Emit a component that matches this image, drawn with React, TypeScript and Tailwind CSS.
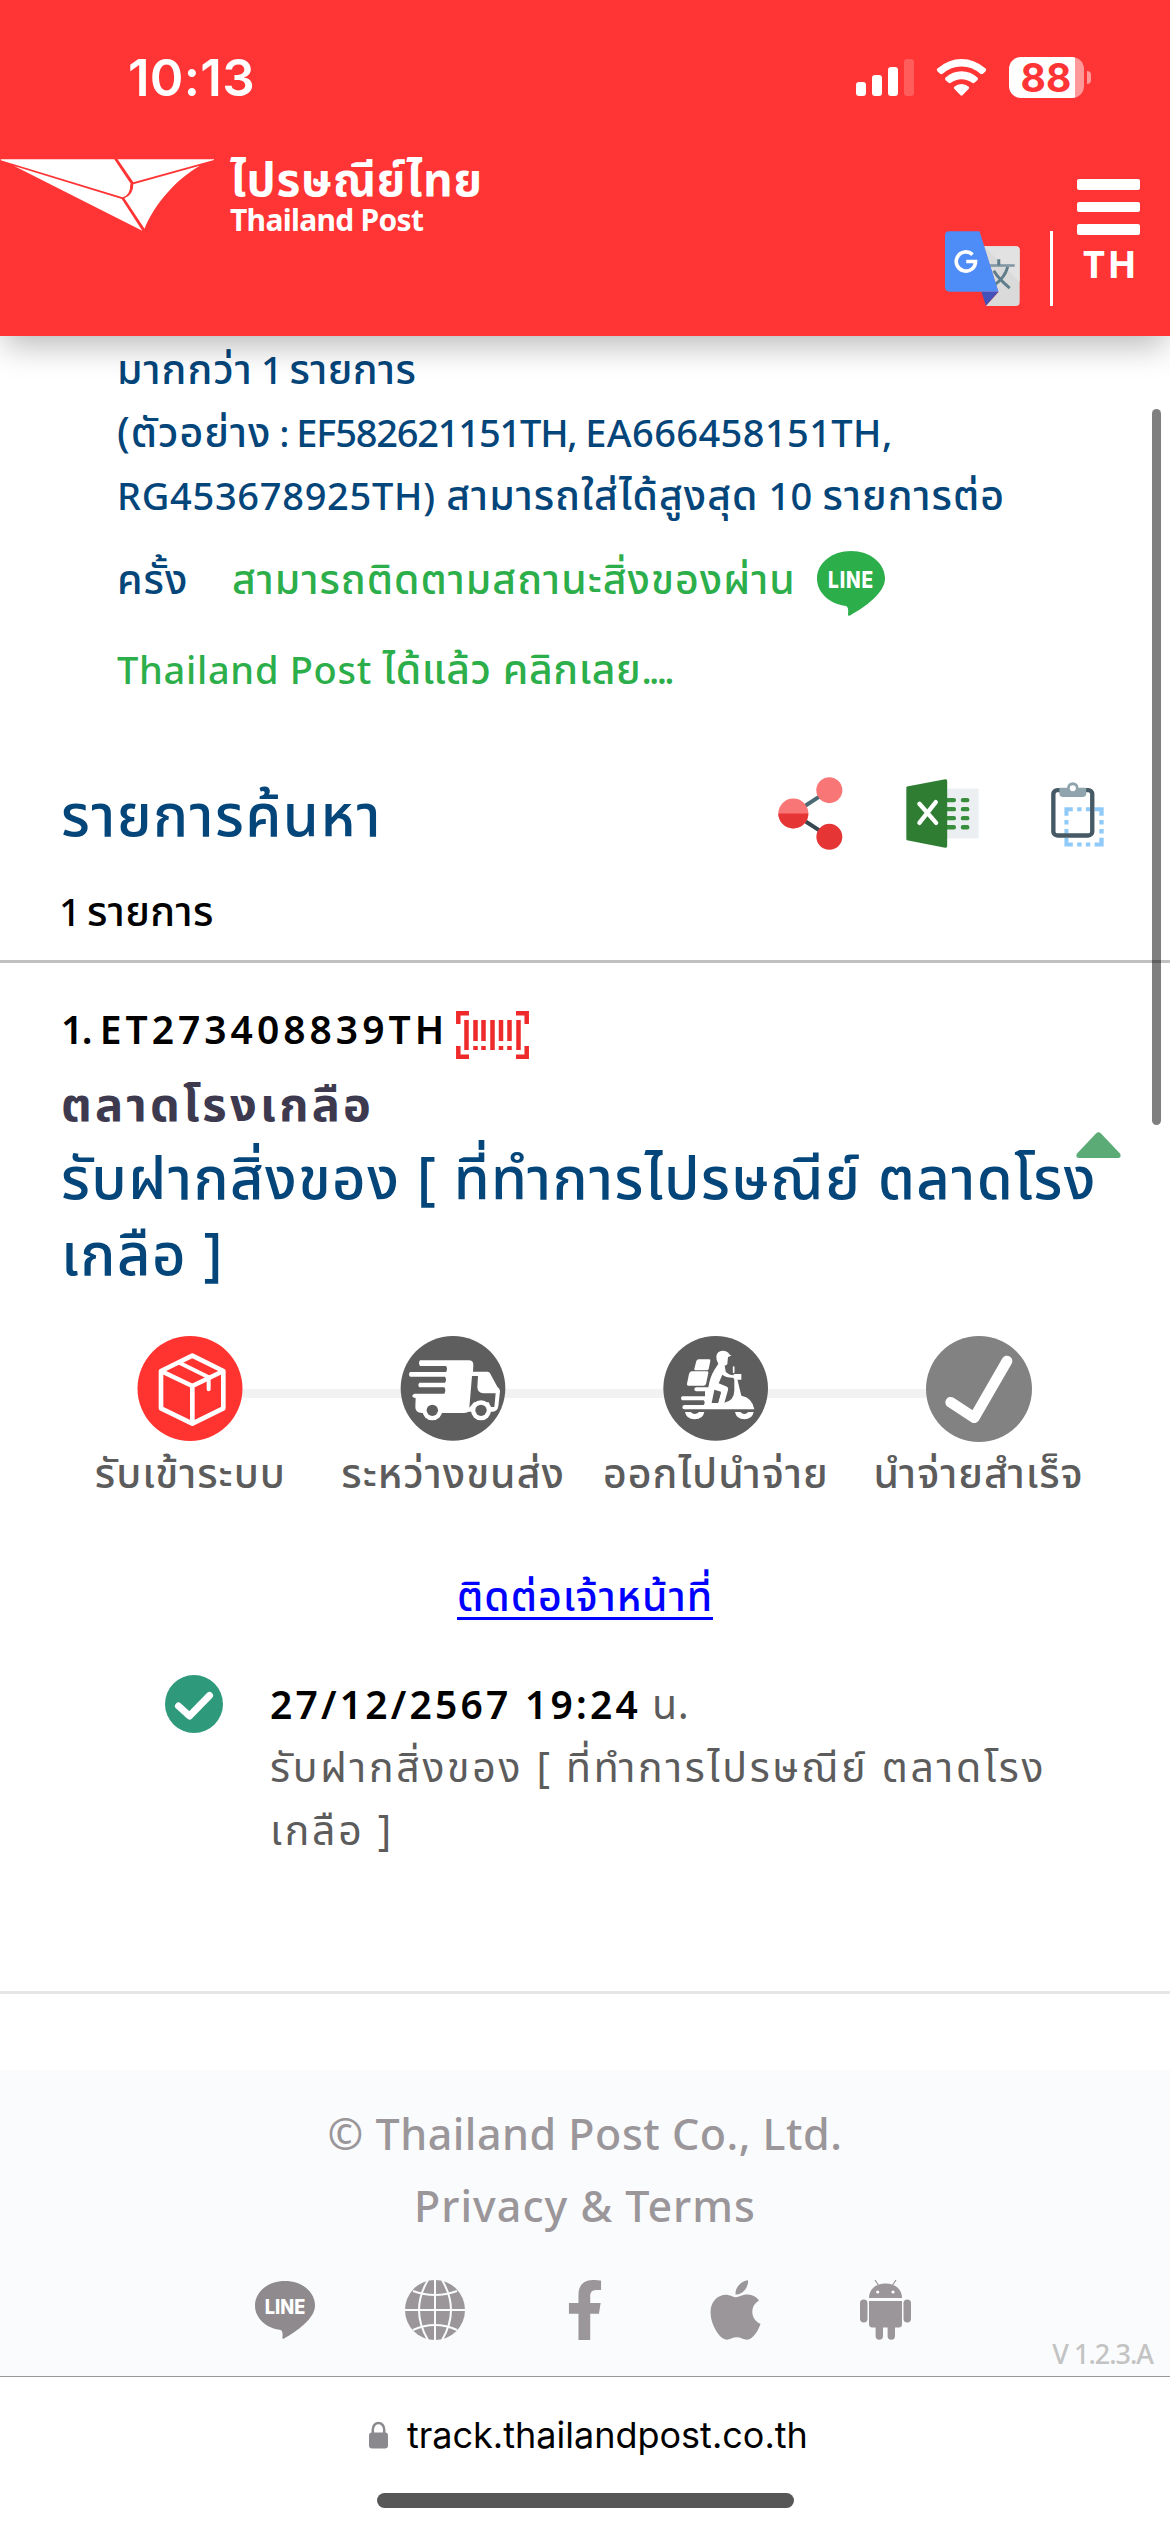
import React from "react";
import { FaApple, FaFacebookF } from "react-icons/fa";

const steps = [
  { label: "รับเข้าระบบ", icon: <BoxIcon /> },
  { label: "ระหว่างขนส่ง", icon: <TruckIcon /> },
  { label: "ออกไปนำจ่าย", icon: <ScooterIcon /> },
  { label: "นำจ่ายสำเร็จ", icon: <DoneIcon /> },
];

function LogoMark() {
  return (
    <svg
      className="mt-[2px] h-[72px] w-[214px]"
      viewBox="0 477 573 216"
      preserveAspectRatio="none"
      fill="#fff"
    >
      <path d="M2 478H306L349 550Q350 586 328 592L2 481Z" />
      <path d="M315 478H573V480L357 547Z" />
      <path d="M38 498L326 597L381 692Z" />
      <path d="M357 553L535 497C470 540 415 610 387 686L333 595Q357 585 357 553Z" />
    </svg>
  );
}

function SignalIcon() {
  return (
    <svg className="h-[37px] w-[58px]" viewBox="0 0 58 37" fill="#fff">
      <rect x="0" y="23" width="10" height="14" rx="3" />
      <rect x="16" y="16" width="10" height="21" rx="3" />
      <rect x="32" y="8" width="10" height="29" rx="3" />
      <rect x="48" y="0" width="10" height="37" rx="3" opacity="0.2" />
    </svg>
  );
}

function WifiIcon() {
  return (
    <svg className="h-[37px] w-[51px]" viewBox="409 177 152 112" fill="#fff">
      <path d="M412 206Q445 177 485 177T558 206Q562 210 558 214L550 222Q546 225 542 222Q517 200 485 200T428 222Q424 225 420 222L412 214Q408 210 412 206Z" />
      <path d="M437 233Q458 214 485 214T533 233Q537 237 533 241L524 249Q521 252 517 249Q503 238 485 238T453 249Q449 252 446 249L437 241Q433 237 437 233Z" />
      <path d="M463 261Q473 253 485 253T507 261Q509 264 507 267L488 287Q485 290 482 287L463 267Q461 264 463 261Z" />
    </svg>
  );
}

function TranslateIcon() {
  return (
    <svg className="h-[75px] w-[75px]" viewBox="435 692 226 226">
      <path d="M552 738H648Q660 738 660 750V906Q660 918 648 918H558L596 876Z" fill="#dadada" />
      <path d="M552 738H648Q660 738 660 750V845Z" fill="#e2e2e2" />
      <path d="M545 875H596L558 917Z" fill="#4352b8" />
      <path d="M570 796H645" stroke="#8299a5" strokeWidth="8" />
      <path d="M597 777V796M624 800Q615 832 587 852M582 812Q596 836 630 864" stroke="#607d8b" strokeWidth="9" fill="none" />
      <path d="M447 693H539L596 875H449Q435 875 435 861V705Q435 693 447 693Z" fill="#4e8cf7" />
      <path d="M518 763A29 29 0 1 0 527 784H499" stroke="#fff" strokeWidth="11" fill="none" />
    </svg>
  );
}

function MenuIcon() {
  return (
    <div className="flex flex-col gap-[12px]">
      <div className="h-[10.5px] w-[63px] rounded-[2px] bg-white" />
      <div className="h-[10.5px] w-[63px] rounded-[2px] bg-white" />
      <div className="h-[10.5px] w-[63px] rounded-[2px] bg-white" />
    </div>
  );
}

function LineIcon({ className }: { className: string }) {
  return (
    <svg className={className} viewBox="0 0 68 65" preserveAspectRatio="none">
      <path
        d="M34 0C15 0 0 12 0 27.500C0 42 13 53 29 55Q32 56 31 64Q31 65 33 64.500C48 56 68 42 68 27.500C68 12 53 0 34 0Z"
        fill="currentColor"
      />
      <text
        x="34"
        y="36.500"
        textAnchor="middle"
        textLength="46"
        lengthAdjust="spacingAndGlyphs"
        fontFamily="Inter, sans-serif"
        fontWeight="800"
        fontSize="22.500"
        fill="#fff"
      >
        LINE
      </text>
    </svg>
  );
}

function ShareIcon() {
  return (
    <svg className="h-[73px] w-[65px]" viewBox="113 80 195 218">
      <path d="M159 189L267 119" stroke="#4a6b74" strokeWidth="12" />
      <path d="M159 189L267 259" stroke="#37474f" strokeWidth="12" />
      <circle cx="267" cy="119" r="39" fill="#f87676" />
      <circle cx="267" cy="259" r="39" fill="#e53535" />
      <circle cx="159" cy="189" r="45" fill="#f87676" />
      <path d="M114 189A45 45 0 0 0 204 189Z" fill="#e53535" />
    </svg>
  );
}

function ExcelIcon() {
  return (
    <svg className="h-[69px] w-[73px]" viewBox="497 86 218 206">
      <rect x="600" y="114" width="114" height="150" rx="5" fill="#eceff1" />
      <path
        d="M620 149H640M620 176H640M620 203H640M620 230H640M667 149H680M667 176H680M667 203H680M667 230H680"
        stroke="#388e3c"
        strokeWidth="13"
        strokeLinecap="round"
      />
      <path d="M500 108L614 87Q620 86 620 92V286Q620 292 614 291L500 269Q498 268 498 265V112Q498 109 500 108Z" fill="#2f7d32" />
      <path d="M537 160L587 217M586 155L537 217" stroke="#fff" strokeWidth="13" strokeLinecap="round" />
    </svg>
  );
}

function ClipboardIcon() {
  return (
    <svg className="h-[65px] w-[53px]" viewBox="932 96 158 193">
      <path
        d="M972 196V171H997V183H984V196ZM1062 171H1089V196H1076V183H1062ZM1089 262V288H1062V276H1076V262ZM997 288H972V262H984V276H997Z"
        fill="#90caf9"
      />
      <path
        d="M1010 171H1023V183H1010ZM1036 171H1049V183H1036ZM1010 276H1023V288H1010ZM1036 276H1049V288H1036ZM972 209H984V222H972ZM972 236H984V249H972ZM1076 209H1089V222H1076ZM1076 236H1089V249H1076Z"
        fill="#90caf9"
      />
      <rect x="939" y="120" width="116" height="135" rx="12" fill="none" stroke="#455a64" strokeWidth="13" />
      <path d="M957 113H980A17 17 0 0 1 1014 113H1037V131Q1037 140 1028 140H966Q957 140 957 131Z" fill="#90a4ae" />
      <circle cx="997" cy="114" r="9" fill="#fff" />
    </svg>
  );
}

function BarcodeIcon() {
  return (
    <svg className="h-[48px] w-[73px]" viewBox="0 0 73 48" fill="none" stroke="#ee2a2a" strokeWidth="4.500">
      <path d="M13 2.300H2.300V13M60 2.300H70.700V13M13 45.700H2.300V35M60 45.700H70.700V35" />
      <path d="M10.500 9V39M36.500 9V39M62.500 9V39" />
      <path d="M19.500 9V30M27.500 9V30M45 9V30M53.500 9V30" />
      <path d="M19.500 35V39M27.500 35V39M45 35V39M53.500 35V39" />
    </svg>
  );
}

function BoxIcon() {
  return (
    <svg className="h-[105px] w-[106px]" viewBox="172 77 318 315" fill="none" stroke="#fff" strokeWidth="14">
      <circle cx="331" cy="234.500" r="157.500" fill="#ff3431" stroke="none" />
      <path d="M338 136L431 182V294L338 340L244 294V182Z" strokeLinejoin="round" />
      <path d="M244 182L338 227L431 182M338 227V340" strokeLinejoin="round" />
      <path d="M299 157L387 201V237" strokeWidth="12" strokeLinecap="round" />
    </svg>
  );
}

function TruckIcon() {
  return (
    <svg className="h-[105px] w-[106px]" viewBox="962 77 318 315">
      <circle cx="1121" cy="234" r="157" fill="#5e5e5e" />
      <path
        d="M1022 150H1168Q1183 150 1182 165L1181 184H1225Q1230 185 1232 189L1254 229Q1263 236 1262 243L1257 288Q1254 304 1240 304H1168Q1162 308 1150 308H1028Q1007 307 1008 289L1009 263Q999 262 999 256Q1000 251 1006 250H1095Q1101 240 1095 231H1020Q1014 224 1020 217H1097Q1103 208 1097 199H992Q986 192 992 185H1100Q1106 176 1100 167H1022Q1016 158 1022 150Z"
        fill="#fff"
      />
      {/* door, with the window left white */}
      <path d="M1178 197H1196L1194 230Q1195 248 1212 249H1249L1245 290H1235L1228 276H1184L1170 292Z" fill="#5e5e5e" />
      <circle cx="1059" cy="300" r="30" fill="#fff" />
      <circle cx="1059" cy="300" r="17" fill="#5e5e5e" />
      <circle cx="1205" cy="300" r="30" fill="#fff" />
      <circle cx="1205" cy="300" r="17" fill="#5e5e5e" />
    </svg>
  );
}

function ScooterIcon() {
  return (
    <svg className="h-[105px] w-[106px]" viewBox="218 77 318 315" fill="#fff">
      <circle cx="376" cy="234" r="157" fill="#5e5e5e" />
      <path d="M325 147H357Q361 147 360 152L355 176Q354 180 350 180H315Q311 180 312 175L318 152Q320 147 325 147Z" />
      <path d="M304 183H351Q355 183 354 188L347 221Q345 226 340 226H294Q289 226 290 220L296 191Q298 183 304 183Z" />
      {/* rider */}
      <path d="M378 138Q380 122 397 121Q412 121 417 132L423 136L413 140L411 161Q409 166 403 165L406 184Q414 193 430 195V191H453V208H432L429 202Q408 203 396 193L385 219L410 229Q415 232 413 239L402 278H383L392 244L372 238L364 278H344V243H318Q312 243 312 237T318 231H354Q359 200 372 179L384 160Q377 151 378 138Z" />
      <path d="M374 247L392 246L383 278H366Z" fill="#5e5e5e" />
      <path d="M430 170V186" stroke="#fff" strokeWidth="5" strokeLinecap="round" />
      {/* scooter body */}
      <path d="M432 207H441L453 256Q486 262 492 297H282Q276 297 276 291T282 284H340Q346 277 340 270H275Q269 264 275 258H345V278H400Q432 272 432 240Z" />
      <path d="M284 305H301Q313 317 326 305H342Q338 327 313 327T284 305Z" />
      <path d="M434 305H450Q462 317 474 305H490Q486 327 462 327T434 305Z" />
    </svg>
  );
}

function DoneIcon() {
  return (
    <svg className="h-[106px] w-[106px]" viewBox="1008 74 318 318" fill="none">
      <circle cx="1167" cy="233" r="159" fill="#828282" />
      <path d="M1082 273L1153 319L1251 149" stroke="#fff" strokeWidth="32" strokeLinecap="round" strokeLinejoin="round" />
    </svg>
  );
}

function GlobeIcon() {
  return (
    <svg className="h-[60px] w-[60px]" viewBox="0 0 60 60">
      <circle cx="30" cy="30" r="30" fill="#9a969a" />
      <g fill="none" stroke="#fafbfd" strokeWidth="2">
        <path d="M30 0V60M0 30H60" />
        <path d="M23 0Q5 30 23 60M37 0Q55 30 37 60" />
        <path d="M8 11Q30 19 52 11M8 50Q30 40 52 50" />
      </g>
    </svg>
  );
}

function AndroidIcon() {
  return (
    <svg className="h-[60px] w-[51px]" viewBox="0 0 51 60" fill="#9a969a">
      <path d="M15 0L19 6M36 0L32 6" stroke="#9a969a" strokeWidth="1.200" />
      <path d="M9 18C9 9 16 3.500 25.500 3.500S42 9 42 18Z" />
      <path d="M9 21H42V44Q42 47.500 38.500 47.500H35V56A3.700 3.700 0 0 1 27.600 56V47.500H23V56A3.700 3.700 0 0 1 15.600 56V47.500H12.500Q9 47.500 9 44Z" />
      <rect x="0" y="19.500" width="7.500" height="23" rx="3.700" />
      <rect x="43.500" y="19.500" width="7.500" height="23" rx="3.700" />
      <circle cx="17.700" cy="12" r="1.600" fill="#fff" />
      <circle cx="33" cy="12" r="1.600" fill="#fff" />
    </svg>
  );
}

function LockIcon() {
  return (
    <svg className="h-[28px] w-[19px]" viewBox="0 0 19 28">
      <path d="M3.800 13V8.500A5.700 6.500 0 0 1 15.200 8.500V13" fill="none" stroke="#8a898e" strokeWidth="2.500" />
      <rect y="11.500" width="19" height="16" rx="3" fill="#8a898e" />
    </svg>
  );
}

const Header = () => (
  <header className="relative z-10 h-[336px] bg-[#ff3434] text-white shadow-[0_14px_30px_-4px_rgba(0,0,0,0.27)]">
    <div className="flex h-[157px] items-start justify-between pr-[79px] pl-[128px]">
      <span className="mt-[48px] font-['Inter'] text-[51px] leading-[60px] font-semibold tracking-[0.3px]">
        10:13
      </span>
      <div className="mt-[57px] flex h-[41px] items-center">
        <SignalIcon />
        <div className="w-[22px]" />
        <WifiIcon />
        <div className="w-[22px]" />
        <div className="flex h-[41px] w-[75px] items-center justify-center rounded-[12px] bg-[linear-gradient(90deg,#fff_66px,#ff9999_66px)] pr-[1px] font-['Inter'] text-[39px] leading-[41px] font-bold text-[#ff3434]">
          88
        </div>
        <div className="ml-[3px] h-[13px] w-[4px] rounded-r-full bg-[#ff9999]" />
      </div>
    </div>
    <div className="flex items-start justify-between pr-[30px]">
      <div className="flex">
        <LogoMark />
        <div className="ml-[16px] whitespace-nowrap">
          <div className="text-[46px] leading-[42px] font-bold tracking-[0.8px]">ไปรษณีย์ไทย</div>
          <div className="mt-[3px] text-[30px] leading-[36px] font-bold tracking-[-0.7px]">
            Thailand Post
          </div>
        </div>
      </div>
      <div className="flex">
        <div className="mt-[74px]">
          <TranslateIcon />
        </div>
        <div className="mt-[74px] ml-[30px] h-[75px] w-[3px] bg-white" />
        <div className="mt-[22px] ml-[24px] w-[63px]">
          <MenuIcon />
          <div className="mt-[3px] pl-[6px] text-[38px] leading-[50px] font-bold tracking-[2.5px]">
            TH
          </div>
        </div>
      </div>
    </div>
  </header>
);

const Intro = () => (
  <div className="mt-[1px] pl-[117px] text-[41px] leading-[63px] font-medium tracking-[1px] whitespace-nowrap text-[#04457a]">
    <p>
      มากกว่า<span className="text-[38px] leading-none tracking-[-1.6px]"> 1 </span>
      <span className="tracking-[0.4px]">รายการ</span>
    </p>
    <p>
      (ตัวอย่าง<span className="text-[36px] leading-none tracking-[-1.2px]"> : </span>
      <span className="text-[38px] leading-none tracking-[-1.2px]">EF582621151TH, </span>
      <span className="text-[38px] leading-none tracking-[0.4px]">EA666458151TH,</span>
    </p>
    <p>
      <span className="text-[38px] leading-none tracking-[0.7px]">RG453678925TH) </span>
      สามารถใส่ได้สูงสุด<span className="text-[38px] leading-none tracking-[0.2px]"> 10 </span>รายการต่อ
    </p>
    <div className="flex h-[105px] items-center text-[#2cae4a]">
      <span className="w-[115px] text-[#04457a]">ครั้ง</span>
      <span className="w-[585px]">สามารถติดตามสถานะสิ่งของผ่าน</span>
      <LineIcon className="mt-[9px] h-[65px] w-[68px]" />
    </div>
    <p className="leading-[75px] text-[#2cae4a]">
      <span className="text-[38px] leading-none tracking-[0.7px]">Thailand Post </span>
      <span className="tracking-[0.6px]">ได้แล้ว คลิกเลย</span>
      <span className="text-[38px] leading-none tracking-[-2.7px]">....</span>
    </p>
  </div>
);

const Progress = () => (
  <div className="relative mt-[44px] h-[172px] pr-[60px] pl-[59px]">
    <div className="absolute top-[53px] left-[190px] h-[9px] w-[789px] bg-[#f2f2f2]" />
    <div className="relative grid grid-cols-4">
      {steps.map((step) => (
        <div key={step.label} className="flex flex-col items-center">
          <div className="h-[104px]">{step.icon}</div>
          <span className="text-[41px] leading-[64px] font-medium tracking-[1px] whitespace-nowrap text-[#5c5c5c]">
            {step.label}
          </span>
        </div>
      ))}
    </div>
  </div>
);

const Footer = () => (
  <footer className="relative mt-[76px] h-[306px] bg-[#fafbfd] pt-[28px] text-center text-[#9a969a]">
    <p className="text-[43px] leading-[72px] font-medium tracking-[0.5px]">© Thailand Post Co., Ltd.</p>
    <p className="text-[43px] leading-[72px] font-medium tracking-[1px]">Privacy &amp; Terms</p>
    <div className="mx-auto mt-[38px] grid h-[60px] w-[750px] grid-cols-5 grid-rows-[60px] place-items-center">
      <LineIcon className="h-[58px] w-[60px] text-[#8e8a8e]" />
      <GlobeIcon />
      <FaFacebookF className="h-[60px] w-[38px]" />
      <FaApple className="h-[68px] w-[51px]" preserveAspectRatio="none" />
      <AndroidIcon />
    </div>
    <span className="absolute right-[17px] bottom-[2px] text-[27px] leading-[40px] font-medium tracking-[-1px] text-[#c3c3c3]">
      V 1.2.3.A
    </span>
  </footer>
);

export default function App() {
  return (
    <div className="relative h-[2532px] w-[1170px] overflow-hidden bg-white font-['Noto_Sans','Noto_Sans_Thai',sans-serif]">
      <Header />
      <main>
        <Intro />
        <div className="mt-[71px] flex h-[73px] items-start pr-[66px] pl-[61px]">
          <h1 className="flex-1 text-[58px] leading-[74px] font-medium tracking-[1.4px] whitespace-nowrap text-[#04457a]">
            รายการค้นหา
          </h1>
          <ShareIcon />
          <div className="mt-[2px] ml-[63px]">
            <ExcelIcon />
          </div>
          <div className="mt-[5px] ml-[72px]">
            <ClipboardIcon />
          </div>
        </div>
        <p className="mt-[28px] pl-[59px] text-[41px] leading-[64px] font-medium tracking-[0.4px] text-black">
          <span className="text-[38px] leading-none tracking-[-1.8px]">1 </span>รายการ
        </p>
        <div className="mt-[18px] h-[3px] bg-[#c1c1c1]" />

        <section className="relative h-[329px] pt-[34px] pl-[61px] whitespace-nowrap">
          <div className="flex h-[64px] items-center">
            <span className="w-[395px] text-[39px] font-semibold tracking-[4px] text-black">
              <span className="tracking-[-1.5px]">1. </span>ET273408839TH
            </span>
            <div className="mt-[12px]">
              <BarcodeIcon />
            </div>
          </div>
          <p className="mt-[10px] text-[47px] leading-[64px] font-bold tracking-[3.2px] text-[#3d3a50]">
            ตลาดโรงเกลือ
          </p>
          <p className="mt-[4px] text-[58px] leading-[76px] font-medium tracking-[1.4px] text-[#04457a]">
            รับฝากสิ่งของ [ ที่ทำการไปรษณีย์ ตลาดโรง
            <br />
            เกลือ ]
          </p>
          <svg className="absolute top-[169px] right-[49px] h-[26px] w-[45px]" viewBox="0 0 45 26">
            <path d="M20 1.500Q22.500 -1 25 1.500L44 21.500Q46 26 42 26H3Q-1 26 1 21.500Z" fill="#5aab76" />
          </svg>
        </section>

        <Progress />

        <div className="mt-[62px] h-[51px] text-center text-[41px] leading-[50px] font-medium tracking-[1px] text-[#0000ff]">
          <span className="inline-block border-b-[3px] border-[#0000ff] leading-[44px]">ติดต่อเจ้าหน้าที่</span>
        </div>

        <div className="mt-[52px] flex pl-[165px] whitespace-nowrap">
          <svg className="mt-[2px] mr-[47px] h-[58px] w-[58px]" viewBox="0 0 58 58">
            <circle cx="29" cy="29" r="29" fill="#2e997b" />
            <path d="M13.500 31L24.500 41L44.500 20.500" fill="none" stroke="#fff" strokeWidth="7" strokeLinejoin="round" strokeLinecap="round" />
          </svg>
          <div className="-mt-px text-[41px] leading-[63px] tracking-[2.7px] text-[#5c5c5c]">
            <p>
              <b className="text-[39px] leading-none font-semibold tracking-[3.2px] text-black">
                27/12/2567 19:24
              </b>
              <span className="tracking-[0.5px]"> น.</span>
            </p>
            <p>รับฝากสิ่งของ [ ที่ทำการไปรษณีย์ ตลาดโรง</p>
            <p>เกลือ ]</p>
          </div>
        </div>
        <div className="mt-[130px] h-[3px] bg-[#e6e6e6]" />
      </main>

      <Footer />

      <div className="border-t border-[#999] bg-white">
        <div className="mt-[33px] flex h-[50px] items-center pl-[369px]">
          <LockIcon />
          <span className="ml-[19px] font-['Inter'] text-[36px] leading-[50px] text-black">
            track.thailandpost.co.th
          </span>
        </div>
        <div className="mx-auto mt-[33px] h-[15px] w-[417px] rounded-full bg-[#575757]" />
      </div>

      {/* scroll thumb */}
      <div className="absolute top-[409px] right-[9px] z-20 h-[716px] w-[9px] rounded-full bg-black/50" />
    </div>
  );
}
